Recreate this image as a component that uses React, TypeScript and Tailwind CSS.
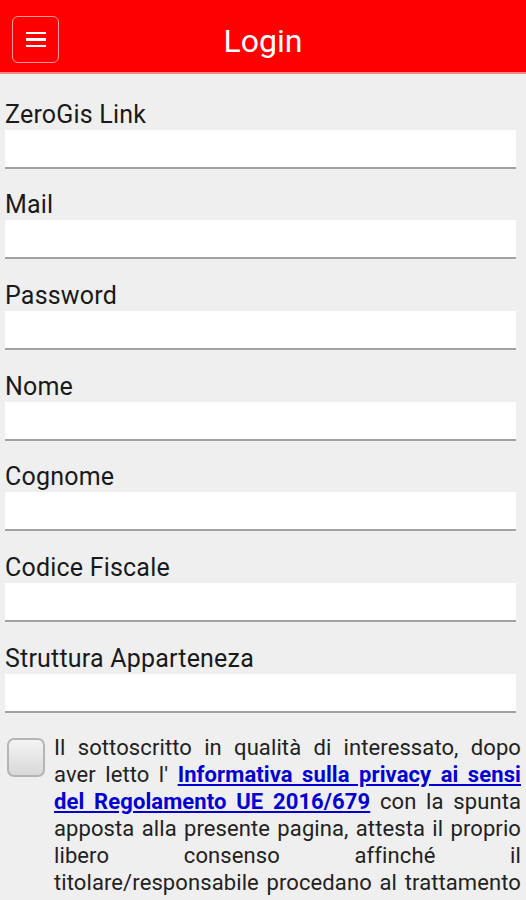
import React from "react";

const fields = [
  "ZeroGis Link",
  "Mail",
  "Password",
  "Nome",
  "Cognome",
  "Codice Fiscale",
  "Struttura Apparteneza",
];

export default function App() {
  return (
    <div className="w-[526px] h-[900px] overflow-hidden bg-[#efefef] font-['Roboto',sans-serif]">
      {/* Header */}
      <header className="relative h-[74px] bg-[#ff0000] border-b-2 border-[#ff8a8a] flex items-center justify-center">
        <button className="absolute left-[12px] top-[16px] w-[47px] h-[47px] rounded-[6px] border-[1.5px] border-[#ff9a9a] flex flex-col items-center justify-center gap-[4px]">
          <span className="block w-[20px] h-[2.5px] bg-white" />
          <span className="block w-[20px] h-[2.5px] bg-white" />
          <span className="block w-[20px] h-[2.5px] bg-white" />
        </button>
        <h1 className="text-[32px] leading-none text-white translate-y-[5px]">Login</h1>
      </header>

      {/* Form */}
      <div className="pt-[4px] pl-[5px] pr-[10px]">
        {fields.map((f) => (
          <div key={f}>
            <div className="h-[51.67px] flex items-end pb-[2px]">
              <label className="text-[25px] leading-[27px] tracking-[0.2px] text-[#1a1a1a]">{f}</label>
            </div>
            <div className="h-[39px] bg-white border-b-[2.5px] border-[#a2a2a2]" />
          </div>
        ))}

        <div className="flex gap-[9px] mt-[26px] pl-[2px] -mr-[5px]">
          <div className="shrink-0 w-[38px] h-[39px] mt-[-1px] rounded-[7px] border-2 border-[#b5b5b5] bg-gradient-to-b from-[#f3f3f3] to-[#d9d9d9]" />
          <p className="flex-1 text-[22px] leading-[27px] tracking-[0.1px] text-[#222] text-justify -mt-[5px]">
            Il sottoscritto in qualità di interessato, dopo aver letto l'{" "}
            <a className="font-bold text-[#0000d0] underline" href="#">
              Informativa sulla privacy ai sensi del Regolamento UE 2016/679
            </a>{" "}
            con la spunta apposta alla presente pagina, attesta il proprio libero consenso affinché il
            titolare/responsabile procedano al trattamento dei propri dati personali come risultanti dalla presente scheda
          </p>
        </div>
      </div>
    </div>
  );
}
